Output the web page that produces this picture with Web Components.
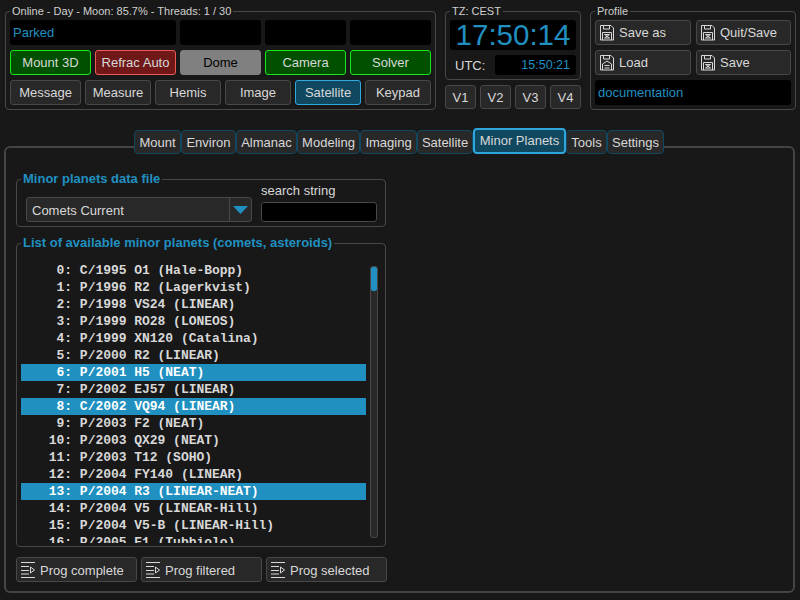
<!DOCTYPE html>
<html>
<head>
<meta charset="utf-8">
<title>Minor Planets</title>
<style>
  html, body { margin: 0; padding: 0; background: #181818; }
  body { font: 13px "Liberation Sans", Arial, sans-serif; color: #d8d8d8; }
</style>
</head>
<body>
<mw-app></mw-app>
<script>
// group box with a title sitting on its border
class MwGroup extends HTMLElement {
  constructor() {
    super();
    this.attachShadow({ mode: "open" });
    this.shadowRoot.innerHTML = `
      <style>
        :host { display: block; }
        fieldset { margin: 0; padding: 0; height: 100%; box-sizing: border-box; min-width: 0;
          border: 1px solid #484848; border-radius: 4px; }
        legend { margin-left: 4px; padding: 0 2px; height: 14px; line-height: 14px; font-size: 11px; color: #d0d0d0; }
        :host([accent]) legend { font-weight: bold; font-size: 13px; color: #2090c0; }
        .body { padding: var(--pad, 2px 4px 4px 4px); }
      </style>
      <fieldset><legend>${this.getAttribute("label")}</legend><div class="body"><slot></slot></div></fieldset>`;
  }
}

class MwBtn extends HTMLElement {
  constructor() {
    super();
    this.attachShadow({ mode: "open" });
    this.shadowRoot.innerHTML = `
      <style>
        :host { display: flex; align-items: center; justify-content: center; box-sizing: border-box; height: 25px;
          background: #282828; border: 1px solid #484848; border-radius: 3px; color: #d8d8d8; white-space: nowrap; }
        :host([kind=green]) { background: #005000; border-color: #18e818; }
        :host([kind=red]) { background: #701818; border-color: #f05858; }
        :host([kind=gray]) { background: #808080; border-color: #808080; color: #000; }
        :host([kind=blue]) { background: #104860; border-color: #30a8e0; }
        :host([icon]) { justify-content: flex-start; padding-left: 4px; gap: 3px; }
        ::slotted(mw-icon) { flex: none; }
      </style>
      <slot></slot>`;
  }
}

class MwDisplay extends HTMLElement {
  constructor() {
    super();
    this.attachShadow({ mode: "open" });
    this.shadowRoot.innerHTML = `
      <style>
        :host { display: flex; align-items: center; box-sizing: border-box; min-height: 25px; padding: 0 3px;
          background: #000; border-radius: 3px; color: #2090c0; white-space: nowrap; }
        :host([big]) { justify-content: center; font-size: 29.500px; height: 30px; min-height: 30px; }
        :host([right]) { justify-content: flex-end; padding-right: 6px; font-size: 12.500px; min-height: 20px; }
      </style>
      <slot></slot>`;
  }
}

const ICONS = {
  save: `<path d="M1.500 1.500h10.500l2.500 2.500v12h-13z"/><path d="M4.500 1.500v3.500h6v-3.500"/><path d="M3.500 16v-7.500h9v7.500"/><path d="M5.500 10.500h5l-5 3.500h5z"/>`,
  load: `<path d="M1.500 1.500h10.500l2.500 2.500v12h-13z"/><path d="M4.500 1.500v3.500h6v-3.500"/><path d="M3.500 16v-6l4.500-3 4.500 3v6"/><path d="M5.500 11.500h5M5.500 14h5"/>`,
  prog: `<path d="M1 1.500h14M1 5.500h8M1 9.500h8M1 13h8M1 16.500h14"/><path d="M10.500 6v6l4-3z"/>`
};
class MwIcon extends HTMLElement {
  constructor() {
    super();
    this.attachShadow({ mode: "open" });
    this.shadowRoot.innerHTML = `
      <style>:host { display: block; width: 16px; height: 18px; } svg { display: block; }</style>
      <svg width="16" height="18" viewBox="1 0 16 18" fill="none" stroke="#d8d8d8" stroke-width="1">${ICONS[this.getAttribute("name")]}</svg>`;
  }
}

class MwTab extends HTMLElement {
  constructor() {
    super();
    this.attachShadow({ mode: "open" });
    this.shadowRoot.innerHTML = `
      <style>
        :host { display: flex; align-items: center; justify-content: center; box-sizing: border-box; height: 24px;
          background: #282828; border: 1px solid #104860; border-radius: 4px; color: #d8d8d8; white-space: nowrap; }
        :host([selected]) { height: 26px; padding-bottom: 1px; background: #104860; border: 2px solid #2ea6dc; }
      </style>
      <slot></slot>`;
  }
}

class MwCombo extends HTMLElement {
  constructor() {
    super();
    this.attachShadow({ mode: "open" });
    this.shadowRoot.innerHTML = `
      <style>
        :host { display: flex; flex: none; box-sizing: border-box; height: 25px; background: #282828; border: 1px solid #484848; border-radius: 3px; }
        .text { flex: 1; display: flex; align-items: center; padding: 1px 0 0 5px; }
        .arrow { width: 21px; display: flex; align-items: center; justify-content: center; border-left: 1px solid #484848; }
      </style>
      <div class="text"><slot></slot></div>
      <div class="arrow"><svg width="15" height="8" viewBox="0 0 15 8"><path d="M0 0h15l-7.500 8z" fill="#2090c0"/></svg></div>`;
  }
}

class MwList extends HTMLElement {
  constructor() {
    super();
    this.attachShadow({ mode: "open" });
    const rows = [
      "C/1995 O1 (Hale-Bopp)", "P/1996 R2 (Lagerkvist)", "P/1998 VS24 (LINEAR)", "P/1999 RO28 (LONEOS)",
      "P/1999 XN120 (Catalina)", "P/2000 R2 (LINEAR)", "P/2001 H5 (NEAT)", "P/2002 EJ57 (LINEAR)",
      "C/2002 VQ94 (LINEAR)", "P/2003 F2 (NEAT)", "P/2003 QX29 (NEAT)", "P/2003 T12 (SOHO)",
      "P/2004 FY140 (LINEAR)", "P/2004 R3 (LINEAR-NEAT)", "P/2004 V5 (LINEAR-Hill)", "P/2004 V5-B (LINEAR-Hill)",
      "P/2005 E1 (Tubbiolo)"
    ];
    const selected = [6, 8, 13];
    this.shadowRoot.innerHTML = `
      <style>
        :host { display: flex; gap: 4px; height: 281px; }
        .rows { width: 345px; overflow: hidden; font: bold 13px/17px "Liberation Mono", "Courier New", monospace; letter-spacing: -0.03px; color: #d8d8d8; }
        .row { height: 17px; padding-left: 20px; white-space: pre; }
        .row.sel { background: #2090c0; color: #fff; }
        .bar { box-sizing: border-box; width: 8px; height: 272px; margin-top: 4px; background: #282828;
          border: 1px solid #484848; border-radius: 3px; }
        .handle { height: 24px; background: #2090c0; border-radius: 2px; }
      </style>
      <div class="rows">${rows.map((r, i) =>
        `<div class="row${selected.includes(i) ? " sel" : ""}">${String(i).padStart(3, " ")}: ${r}</div>`).join("")}</div>
      <div class="bar"><div class="handle"></div></div>`;
  }
}

class MwApp extends HTMLElement {
  constructor() {
    super();
    this.attachShadow({ mode: "open" });
    this.shadowRoot.innerHTML = `
      <style>
        :host { display: block; width: 800px; height: 600px; box-sizing: border-box; padding: 4px 0 0 5px; overflow: hidden; }
        .top { display: flex; height: 106px; }
        .status { width: 431px; }
        .grid { display: grid; gap: 5px 4px; }
        .g5 { grid-template-columns: repeat(5, 81px); }
        .g6 { grid-template-columns: 71px repeat(5, 66px); }
        .span2 { grid-column: span 2; }
        .rows { display: flex; flex-direction: column; gap: 5px; }
        .time { width: 136px; margin-left: 9px; }
        .utc { display: flex; align-items: center; margin-top: 5px; }
        .utc span { width: 45px; padding-left: 5px; box-sizing: border-box; }
        .utc mw-display { flex: 1; }
        .views { display: grid; grid-template-columns: repeat(4, 31px); gap: 4px; margin-top: 5px; }
        .views mw-btn { height: 24px; }
        .profile { width: 206px; margin-left: 9px; }
        .g2 { grid-template-columns: 96px 95px; gap: 5px; }
        .tabs { display: grid; grid-template-columns: 47px 55px 61px 63px 57px 56px 93px 41px 57px; justify-content: center; align-items: end;
          margin: 18px 6px -8px -1px; position: relative; z-index: 1; height: 26px; }
        .pane { box-sizing: border-box; width: 791px; height: 447px; margin-left: -1px; padding: 24px 9px 0 10px;
          border: 2px solid #444; border-radius: 6px; }
        .left { width: 370px; }
        .file { --pad: 0 8px 4px 9px; }
        .file-row { display: flex; gap: 9px; align-items: flex-end; }
        .file-row mw-combo { width: 226px; }
        .search { width: 116px; flex: none; }
        .search label { display: block; height: 16px; line-height: 16px; margin: -3px 0 3px; }
        .search div { box-sizing: border-box; height: 20px; background: #000; border: 1px solid #484848; border-radius: 3px; }
        .list { --pad: 12px 0 3px 4px; margin-top: 9px; height: 311px; }
        .prog { display: grid; grid-template-columns: repeat(3, 121px); gap: 4px; margin-top: 10px; }
        .prog mw-btn { padding-top: 2px; }
        .prog mw-icon { margin-top: -2px; }
      </style>
      <div class="top">
        <mw-group class="status" label="Online - Day - Moon: 85.7% - Threads: 1 / 30">
          <div class="rows">
            <div class="grid g5">
              <mw-display class="span2">Parked</mw-display><mw-display></mw-display><mw-display></mw-display><mw-display></mw-display>
            </div>
            <div class="grid g5">
              <mw-btn kind="green">Mount 3D</mw-btn><mw-btn kind="red">Refrac Auto</mw-btn><mw-btn kind="gray">Dome</mw-btn><mw-btn kind="green">Camera</mw-btn><mw-btn kind="green">Solver</mw-btn>
            </div>
            <div class="grid g6">
              <mw-btn>Message</mw-btn><mw-btn>Measure</mw-btn><mw-btn>Hemis</mw-btn><mw-btn>Image</mw-btn><mw-btn kind="blue">Satellite</mw-btn><mw-btn>Keypad</mw-btn>
            </div>
          </div>
        </mw-group>
        <div class="time">
          <mw-group label="TZ: CEST">
            <mw-display big>17:50:14</mw-display>
            <div class="utc"><span>UTC:</span><mw-display right>15:50:21</mw-display></div>
          </mw-group>
          <div class="views"><mw-btn>V1</mw-btn><mw-btn>V2</mw-btn><mw-btn>V3</mw-btn><mw-btn>V4</mw-btn></div>
        </div>
        <mw-group class="profile" label="Profile">
          <div class="rows">
            <div class="grid g2">
              <mw-btn icon><mw-icon name="save"></mw-icon>Save as</mw-btn><mw-btn icon><mw-icon name="save"></mw-icon>Quit/Save</mw-btn>
              <mw-btn icon><mw-icon name="load"></mw-icon>Load</mw-btn><mw-btn icon><mw-icon name="save"></mw-icon>Save</mw-btn>
            </div>
            <mw-display>documentation</mw-display>
          </div>
        </mw-group>
      </div>
      <div class="tabs">
        <mw-tab>Mount</mw-tab><mw-tab>Environ</mw-tab><mw-tab>Almanac</mw-tab><mw-tab>Modeling</mw-tab><mw-tab>Imaging</mw-tab><mw-tab>Satellite</mw-tab><mw-tab selected>Minor Planets</mw-tab><mw-tab>Tools</mw-tab><mw-tab>Settings</mw-tab>
      </div>
      <div class="pane">
        <div class="left">
          <mw-group class="file" accent label="Minor planets data file">
            <div class="file-row">
              <mw-combo>Comets Current</mw-combo>
              <div class="search"><label>search string</label><div></div></div>
            </div>
          </mw-group>
          <mw-group class="list" accent label="List of available minor planets (comets, asteroids)">
            <mw-list></mw-list>
          </mw-group>
          <div class="prog">
            <mw-btn icon><mw-icon name="prog"></mw-icon>Prog complete</mw-btn>
            <mw-btn icon><mw-icon name="prog"></mw-icon>Prog filtered</mw-btn>
            <mw-btn icon><mw-icon name="prog"></mw-icon>Prog selected</mw-btn>
          </div>
        </div>
      </div>`;
  }
}

customElements.define("mw-group", MwGroup);
customElements.define("mw-btn", MwBtn);
customElements.define("mw-display", MwDisplay);
customElements.define("mw-icon", MwIcon);
customElements.define("mw-tab", MwTab);
customElements.define("mw-combo", MwCombo);
customElements.define("mw-list", MwList);
customElements.define("mw-app", MwApp);
</script>
</body>
</html>
